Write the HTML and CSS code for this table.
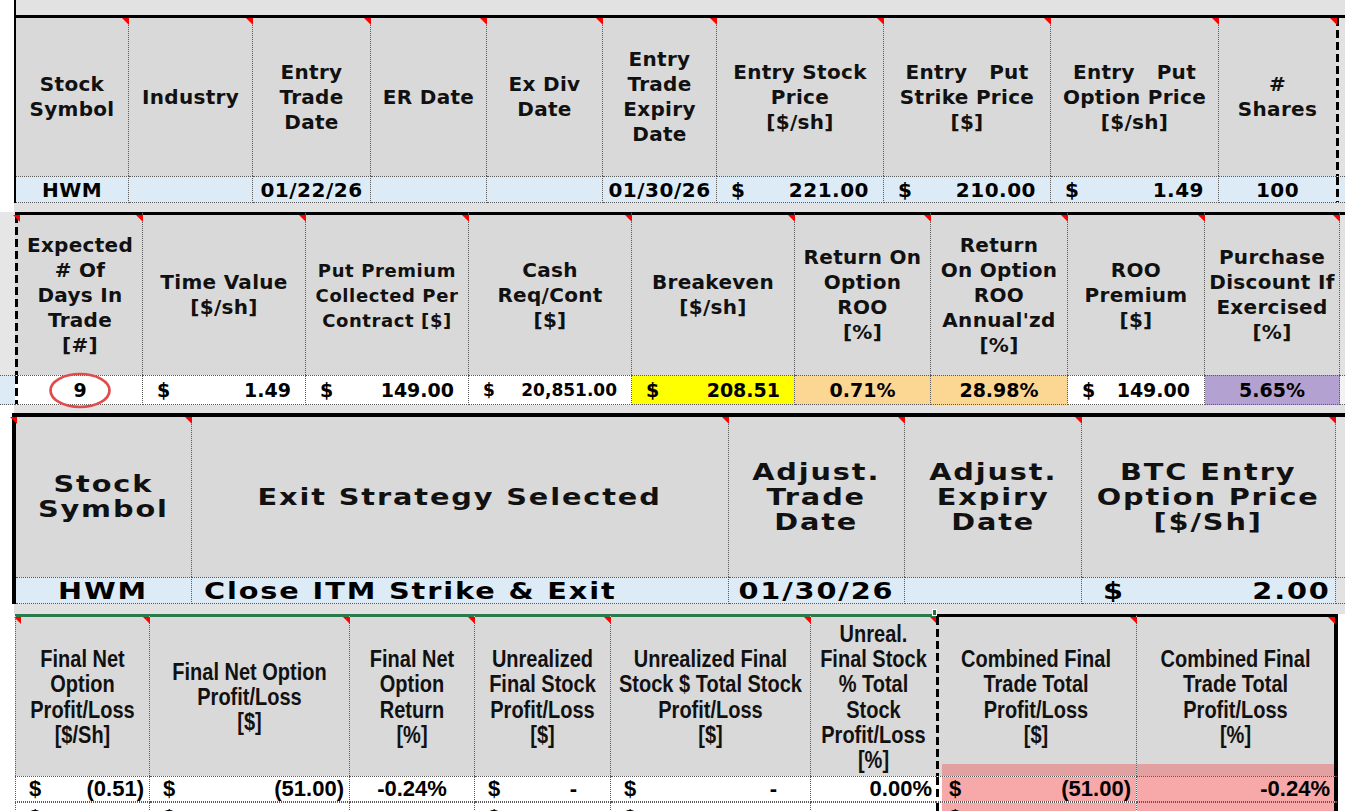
FILE: index.html
```html
<!DOCTYPE html>
<html>
<head>
<meta charset="utf-8">
<title>Trade sheet</title>
<link rel="stylesheet" href="styles.css">
</head>
<body>
<div class="sheet">
  <div class="topstrip"></div>

  <div class="grid b1">
    <div class="h"><span>Stock<br>Symbol</span></div>
    <div class="h"><span>Industry</span></div>
    <div class="h"><span>Entry<br>Trade<br>Date</span></div>
    <div class="h"><span>ER Date</span></div>
    <div class="h"><span>Ex Div<br>Date</span></div>
    <div class="h"><span>Entry<br>Trade<br>Expiry<br>Date</span></div>
    <div class="h"><span>Entry Stock<br>Price<br>[$/sh]</span></div>
    <div class="h"><span>Entry&nbsp;&nbsp; Put<br>Strike Price<br>[$]</span></div>
    <div class="h"><span>Entry&nbsp;&nbsp; Put<br>Option Price<br>[$/sh]</span></div>
    <div class="h nb"><span>#<br>Shares</span></div>
    <div class="xh dashl"></div>

    <div class="d">HWM</div>
    <div class="d"></div>
    <div class="d">01/22/26</div>
    <div class="d"></div>
    <div class="d"></div>
    <div class="d">01/30/26</div>
    <div class="d acc"><span>$</span><span>221.00</span></div>
    <div class="d acc"><span>$</span><span>210.00</span></div>
    <div class="d acc"><span>$</span><span>1.49</span></div>
    <div class="d nb">100</div>
    <div class="xd blue dashl"></div>
  </div>

  <div class="strip s9"></div>

  <div class="grid b2">
    <div class="g"></div>
    <div class="dh dashl"></div>
    <div class="h tl"><span>Expected<br># Of<br>Days In<br>Trade<br>[#]</span></div>
    <div class="h"><span>Time Value<br>[$/sh]</span></div>
    <div class="h sm"><span>Put Premium<br>Collected Per<br>Contract [$]</span></div>
    <div class="h"><span>Cash<br>Req/Cont<br>[$]</span></div>
    <div class="h"><span>Breakeven<br>[$/sh]</span></div>
    <div class="h"><span>Return On<br>Option<br>ROO<br>[%]</span></div>
    <div class="h"><span>Return<br>On Option<br>ROO<br>Annual'zd<br>[%]</span></div>
    <div class="h"><span>ROO<br>Premium<br>[$]</span></div>
    <div class="h"><span>Purchase<br>Discount If<br>Exercised<br>[%]</span></div>
    <div class="xh top3"></div>

    <div class="gd"></div>
    <div class="dd dashl"></div>
    <div class="d ringcell"><span>9</span><svg class="ring" width="64" height="39" viewBox="0 0 64 39"><ellipse cx="32" cy="19.5" rx="29.5" ry="16.5" fill="none" stroke="#e24b4b" stroke-width="2.7"/></svg></div>
    <div class="d acc"><span>$</span><span>1.49</span></div>
    <div class="d acc"><span>$</span><span>149.00</span></div>
    <div class="d acc small"><span>$</span><span>20,851.00</span></div>
    <div class="d acc yel"><span>$</span><span>208.51</span></div>
    <div class="d org">0.71%</div>
    <div class="d org">28.98%</div>
    <div class="d acc"><span>$</span><span>149.00</span></div>
    <div class="d pur">5.65%</div>
    <div class="xd"></div>
  </div>

  <div class="strip s8"></div>

  <div class="grid b3">
    <div class="h tl3"><span>Stock<br>Symbol</span></div>
    <div class="h"><span>Exit Strategy Selected</span></div>
    <div class="h"><span>Adjust.<br>Trade<br>Date</span></div>
    <div class="h"><span>Adjust.<br>Expiry<br>Date</span></div>
    <div class="h"><span>BTC Entry<br>Option Price<br>[$/Sh]</span></div>
    <div class="xh"></div>

    <div class="d"><span>HWM</span></div>
    <div class="d left"><span>Close ITM Strike &amp; Exit</span></div>
    <div class="d"><span>01/30/26</span></div>
    <div class="d"></div>
    <div class="d acc btc"><span>$</span><span>2.00</span></div>
    <div class="xd grey"></div>
  </div>

  <div class="strip s10"></div>

  <div class="grid b4">
    <div class="h first tl4"><span>Final Net<br>Option<br>Profit/Loss<br>[$/Sh]</span></div>
    <div class="h"><span>Final Net Option<br>Profit/Loss<br>[$]</span></div>
    <div class="h"><span>Final Net<br>Option<br>Return<br>[%]</span></div>
    <div class="h"><span>Unrealized<br>Final Stock<br>Profit/Loss<br>[$]</span></div>
    <div class="h"><span>Unrealized Final<br>Stock $ Total Stock<br>Profit/Loss<br>[$]</span></div>
    <div class="h nb"><span>Unreal.<br>Final Stock<br>% Total<br>Stock<br>Profit/Loss<br>[%]</span></div>
    <div class="h k c7h"><i class="handle"></i><span>Combined Final<br>Trade Total<br>Profit/Loss<br>[$]</span></div>
    <div class="h k c8h last"><span>Combined Final<br>Trade Total<br>Profit/Loss<br>[%]</span></div>

    <div class="d first acc r4"><span>$</span><span>(0.51)</span></div>
    <div class="d acc r4"><span>$</span><span>(51.00)</span></div>
    <div class="d">-0.24%</div>
    <div class="d acc dash0"><span>$</span><span>-</span></div>
    <div class="d acc dash0"><span>$</span><span>-</span></div>
    <div class="d nb right">0.00%</div>
    <div class="d acc r4 c7d"><span>$</span><span>(51.00)</span></div>
    <div class="d right pink last">-0.24%</div>

    <div class="d first acc r4 cut"><span>$</span><span></span></div>
    <div class="d acc r4 cut"><span>$</span><span></span></div>
    <div class="d cut"></div>
    <div class="d acc dash0 cut"><span>$</span><span></span></div>
    <div class="d acc dash0 cut"><span>$</span><span></span></div>
    <div class="d nb cut"></div>
    <div class="d acc r4 c7d cut"><span>$</span><span></span></div>
    <div class="d pink last cut"></div>
  </div>
</div>
</body>
</html>
```

FILE: styles.css
```css
* { box-sizing: border-box; }
html, body { margin: 0; padding: 0; background: #fff; }
body {
  width: 1351px;
  height: 811px;
  overflow: hidden;
  font-family: "DejaVu Sans", "Liberation Sans", sans-serif;
  font-weight: 700;
  color: #111;
}

.topstrip {
  width: 1331px;
  height: 15px;
  margin-left: 14px;
  border-left: 2px solid #000;
  background: #e2e2e2;
}
.strip { width: 1331px; margin-left: 14px; background: #e2e2e2; }
.s9 { height: 9px; }
.s8 { height: 8px; }
.s10 { height: 10px; }

.grid { display: grid; }

/* header cells */
.h {
  position: relative;
  display: flex;
  align-items: center;
  justify-content: center;
  text-align: center;
  background-color: #d9d9d9;
  border-right: 1px dotted #5a5a5a;
  line-height: 25px;
  font-size: 20px;
  letter-spacing: 0.3px;
}
.h::after {
  content: "";
  position: absolute;
  top: 0;
  right: -1px;
  border-top: 7px solid #f00;
  border-left: 7px solid transparent;
}

/* data cells */
.d {
  position: relative;
  display: flex;
  align-items: center;
  justify-content: center;
  background-color: #ddebf7;
  border-right: 1px dotted #5a5a5a;
  border-top: 1px dotted #5a5a5a;
  border-bottom: 1px dotted #5a5a5a;
  font-size: 20px;
  white-space: nowrap;
  color: #000;
}
.acc { justify-content: space-between; padding: 0 14px; }
.left { justify-content: flex-start; padding-left: 12px; }
.right { justify-content: flex-end; padding-right: 5px; }
.nb { border-right: none; }

.xh { background-color: #e2e2e2; }
.xd {
  background-color: #e2e2e2;
  border-top: 1px dotted #5a5a5a;
  border-bottom: 1px dotted #5a5a5a;
}
.xd.blue { background-color: #ddebf7; }
.top3 { border-top: 3px solid #000; }

.dashl {
  background-image: repeating-linear-gradient(#000 0 8px, transparent 8px 12px);
  background-size: 3px 100%;
  background-repeat: no-repeat;
}

/* block 1 */
.b1 {
  width: 1331px;
  margin-left: 14px;
  border-left: 2px solid #000;
  border-top: 3px solid #000;
  grid-template-columns: 113px 124px 118px 116px 116px 114px 167px 167px 168px 117px 9px;
  grid-template-rows: 158px 27px;
}
.b1 .d { letter-spacing: 0.5px; }

/* block 2 */
.b2 {
  width: 1345px;
  grid-template-columns: 15px 3px 125px 163px 163px 163px 163px 136px 137px 137px 135px 5px;
  grid-template-rows: 163px 30px;
}
.b2 .h { border-top: 3px solid #000; }
.b2 .g { background: #e6e6e6; }
.b2 .gd {
  background: #ddebf7;
  border-top: 1px dotted #5a5a5a;
  border-bottom: 1px dotted #5a5a5a;
}
.dh { background-color: #d9d9d9; border-top: 3px solid #000; }
.dd {
  background-color: #fff;
  border-top: 1px dotted #5a5a5a;
  border-bottom: 1px dotted #5a5a5a;
}
.b2 .d { background-color: #fff; font-size: 19px; }
.b2 .sm { font-size: 18px; letter-spacing: 0.6px; }
.b2 .d.small { font-size: 17px; }
.b2 .d.yel { background-color: #ffff00; }
.b2 .d.org { background-color: #fcd693; }
.b2 .d.pur { background-color: #b3a2d1; }
.b2 .xd { background-color: #f2f2f2; }

.tl::before, .tl3::before, .tl4::before {
  content: "";
  position: absolute;
  top: 0;
  left: -5px;
  border-top: 7px solid #f00;
  border-left: 7px solid transparent;
}
.tl3::before { left: -6px; }
.tl4::before { left: -2px; }

.ringcell { overflow: visible; }
.ring {
  position: absolute;
  left: 30px;
  top: -5px;
}

/* block 3 : wide, stretched lettering */
.b3 {
  width: 1333px;
  margin-left: 12px;
  border-left: 4px solid #000;
  border-top: 4px solid #000;
  grid-template-columns: 176px 537px 176px 177px 254px 9px;
  grid-template-rows: 160px 27px;
}
.b3 .h, .b3 .d { font-size: 23px; letter-spacing: 1.5px; }
.b3 .h { line-height: 25px; }
.b3 .h span, .b3 .d span {
  display: inline-block;
  transform: scaleX(1.25);
}
.b3 .left span { transform-origin: left center; }
.b3 .acc span:first-child { transform-origin: left center; }
.b3 .acc span:last-child { transform-origin: right center; }
.b3 .btc { padding: 0 4px 0 21px; }

/* block 4 : condensed-looking headers */
.b4 {
  width: 1323px;
  margin-left: 15px;
  grid-template-columns: 135px 200px 125px 136px 200px 125px 201px 201px;
  grid-template-rows: 162px 26px 26px;
}
.b4 .h {
  font-family: "Liberation Sans", Arial, sans-serif;
  font-size: 20px;
  letter-spacing: 0;
  border-top: 3px solid #2b7a4b;
}
.b4 .h span {
  display: block;
  line-height: 22px;
  transform: scaleY(1.15);
}
.b4 .h.k { border-top-color: #000; }
.b4 .d {
  font-family: "Liberation Sans", Arial, sans-serif;
  font-size: 22px;
  background-color: #fff;
}
.b4 .first { border-left: 1px dotted #5a5a5a; }
.b4 .last { border-right: 4px solid #000; }
.b4 .r4 { padding: 0 5px 0 13px; }
.b4 .dash0 { padding: 0 33px 0 13px; }
.b4 .cut { align-items: flex-start; padding-top: 2px; }

.c7h {
  background-image: repeating-linear-gradient(#000 0 8px, transparent 8px 12px), linear-gradient(#e2a0a0, #e2a0a0);
  background-size: 3px 100%, calc(100% - 6px) 12px;
  background-position: 0 0, 100% 100%;
  background-repeat: no-repeat;
}
.c8h {
  background-image: linear-gradient(#e2a0a0, #e2a0a0);
  background-size: 100% 12px;
  background-position: 0 100%;
  background-repeat: no-repeat;
}
.b4 .d.c7d {
  background-color: #fff;
  background-image: repeating-linear-gradient(#000 0 8px, transparent 8px 12px), linear-gradient(#f7a8a8, #f7a8a8);
  background-size: 3px 100%, calc(100% - 6px) 100%;
  background-position: 0 0, 100% 0;
  background-repeat: no-repeat;
}
.b4 .d.pink { background-color: #f7a8a8; }
.b4 .d.right { padding-right: 4px; }

.handle {
  position: absolute;
  left: -4px;
  top: -8px;
  width: 5px;
  height: 7px;
  background: #217346;
  border: 1px solid #fff;
}
```
